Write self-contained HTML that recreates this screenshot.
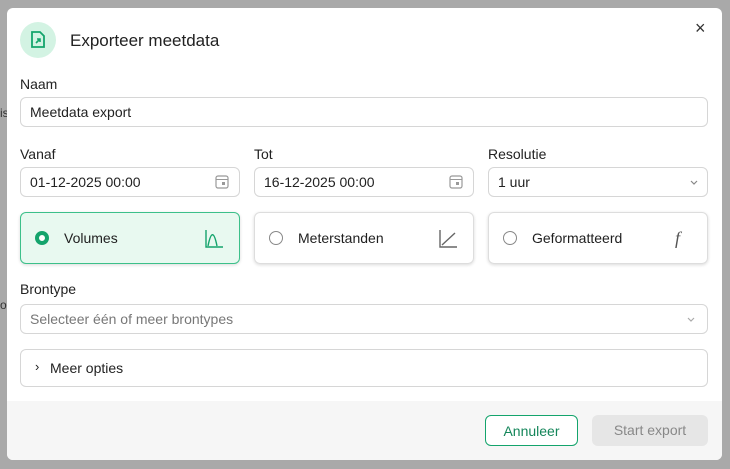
<!DOCTYPE html>
<html><head><style>
*{box-sizing:border-box;margin:0;padding:0}
body{width:730px;height:469px;background:#a9a9a9;font-family:"Liberation Sans",sans-serif;position:relative;overflow:hidden;color:#1f1f1f}
.bgt{position:absolute;font-size:12px;color:#333}
.modal{position:absolute;left:7px;top:8px;width:715px;height:452px;background:#fff;border-radius:6px;overflow:hidden}
.abs{position:absolute}
.lbl{position:absolute;font-size:14px;color:#222}
.inp{position:absolute;height:30px;border:1px solid #d6d6d6;border-radius:6px;font-size:14px;padding-left:9px;line-height:28px;color:#222}
.card{position:absolute;top:204px;width:220px;height:52px;border:1px solid #ddd;border-radius:6px;box-shadow:0 1px 3px rgba(0,0,0,.15);font-size:14px;line-height:50px;padding-left:43px}
.radio{position:absolute;left:14px;top:18px;width:14px;height:14px;border:1px solid #888;border-radius:50%}
.foot{position:absolute;left:0;top:393px;width:715px;height:59px;background:#f6f6f6}
.btn{position:absolute;top:407px;height:31px;border-radius:6px;font-size:14px;line-height:30px;text-align:center}
</style></head><body>
<div class="bgt" style="left:0;top:106px">is</div>
<div class="bgt" style="left:0;top:298px">o</div>
<div class="modal">
 <div class="abs" style="left:13px;top:14px;width:36px;height:36px;border-radius:50%;background:#d3f3e3"></div>
 <svg class="abs" style="left:24px;top:23px" width="14" height="17" viewBox="0 0 14 17"><path d="M1 1h8l4 4v11H1z" fill="none" stroke="#14a46c" stroke-width="1.8"/><path d="M5 12l4-4M6 8h3v3" stroke="#14a46c" stroke-width="1.6" fill="none"/></svg>
 <div class="abs" style="left:63px;top:23px;font-size:17px;color:#222">Exporteer meetdata</div>
 <div class="abs" style="left:688px;top:10px;font-size:18px;color:#333">×</div>
 <div class="lbl" style="left:13px;top:68px">Naam</div>
 <div class="inp" style="left:13px;top:89px;width:688px">Meetdata export</div>
 <div class="lbl" style="left:13px;top:138px">Vanaf</div>
 <div class="inp" style="left:13px;top:159px;width:220px">01-12-2025 00:00</div>
 <div class="lbl" style="left:247px;top:138px">Tot</div>
 <div class="inp" style="left:247px;top:159px;width:220px">16-12-2025 00:00</div>
 <svg class="abs" style="left:208px;top:166px" width="14" height="15"><rect x="1" y="2" width="12" height="12" rx="2" fill="none" stroke="#999" stroke-width="1.2"/><line x1="1" y1="5.5" x2="13" y2="5.5" stroke="#999"/><rect x="7" y="8" width="3" height="3" fill="#999"/></svg>
 <svg class="abs" style="left:442px;top:166px" width="14" height="15"><rect x="1" y="2" width="12" height="12" rx="2" fill="none" stroke="#999" stroke-width="1.2"/><line x1="1" y1="5.5" x2="13" y2="5.5" stroke="#999"/><rect x="7" y="8" width="3" height="3" fill="#999"/></svg>
 <div class="lbl" style="left:481px;top:138px">Resolutie</div>
 <div class="inp" style="left:481px;top:159px;width:220px">1 uur</div>
 <svg class="abs" style="left:682px;top:171px" width="10" height="7"><path d="M2 2l3 3 3-3" stroke="#888" fill="none" stroke-width="1.2"/></svg>
 <div class="card" style="left:13px;background:#e8f9f0;border-color:#3cc08a">Volumes<div class="radio" style="border:4px solid #14a46c;background:#fff"></div>
  <svg class="abs" style="left:183px;top:16px" width="20" height="20"><path d="M2 1v17h17M4 17c3-15 6-15 9 0" stroke="#14a46c" fill="none" stroke-width="1.4"/></svg></div>
 <div class="card" style="left:247px">Meterstanden<div class="radio"></div>
  <svg class="abs" style="left:183px;top:16px" width="20" height="20"><path d="M2 1v17h17M4 16L17 4" stroke="#666" fill="none" stroke-width="1.4"/></svg></div>
 <div class="card" style="left:481px">Geformatteerd<div class="radio"></div>
  <div class="abs" style="left:186px;top:0;font-style:italic;font-family:'Liberation Serif',serif;font-size:18px;color:#555">f</div></div>
 <div class="lbl" style="left:13px;top:273px">Brontype</div>
 <div class="inp" style="left:13px;top:296px;width:688px;color:#777">Selecteer één of meer brontypes</div>
 <svg class="abs" style="left:679px;top:308px" width="10" height="7"><path d="M2 2l3 3 3-3" stroke="#aaa" fill="none" stroke-width="1.2"/></svg>
 <div class="inp" style="left:13px;top:341px;width:688px;height:38px;line-height:36px;padding-left:29px">Meer opties</div>
 <div class="abs" style="left:28px;top:351px;font-size:13px">›</div>
 <div class="foot"></div>
 <div class="btn" style="left:478px;width:93px;border:1px solid #14a46c;color:#14865a;background:#fff">Annuleer</div>
 <div class="btn" style="left:585px;width:116px;background:#e6e6e6;color:#888">Start export</div>
</div>
</body></html>
